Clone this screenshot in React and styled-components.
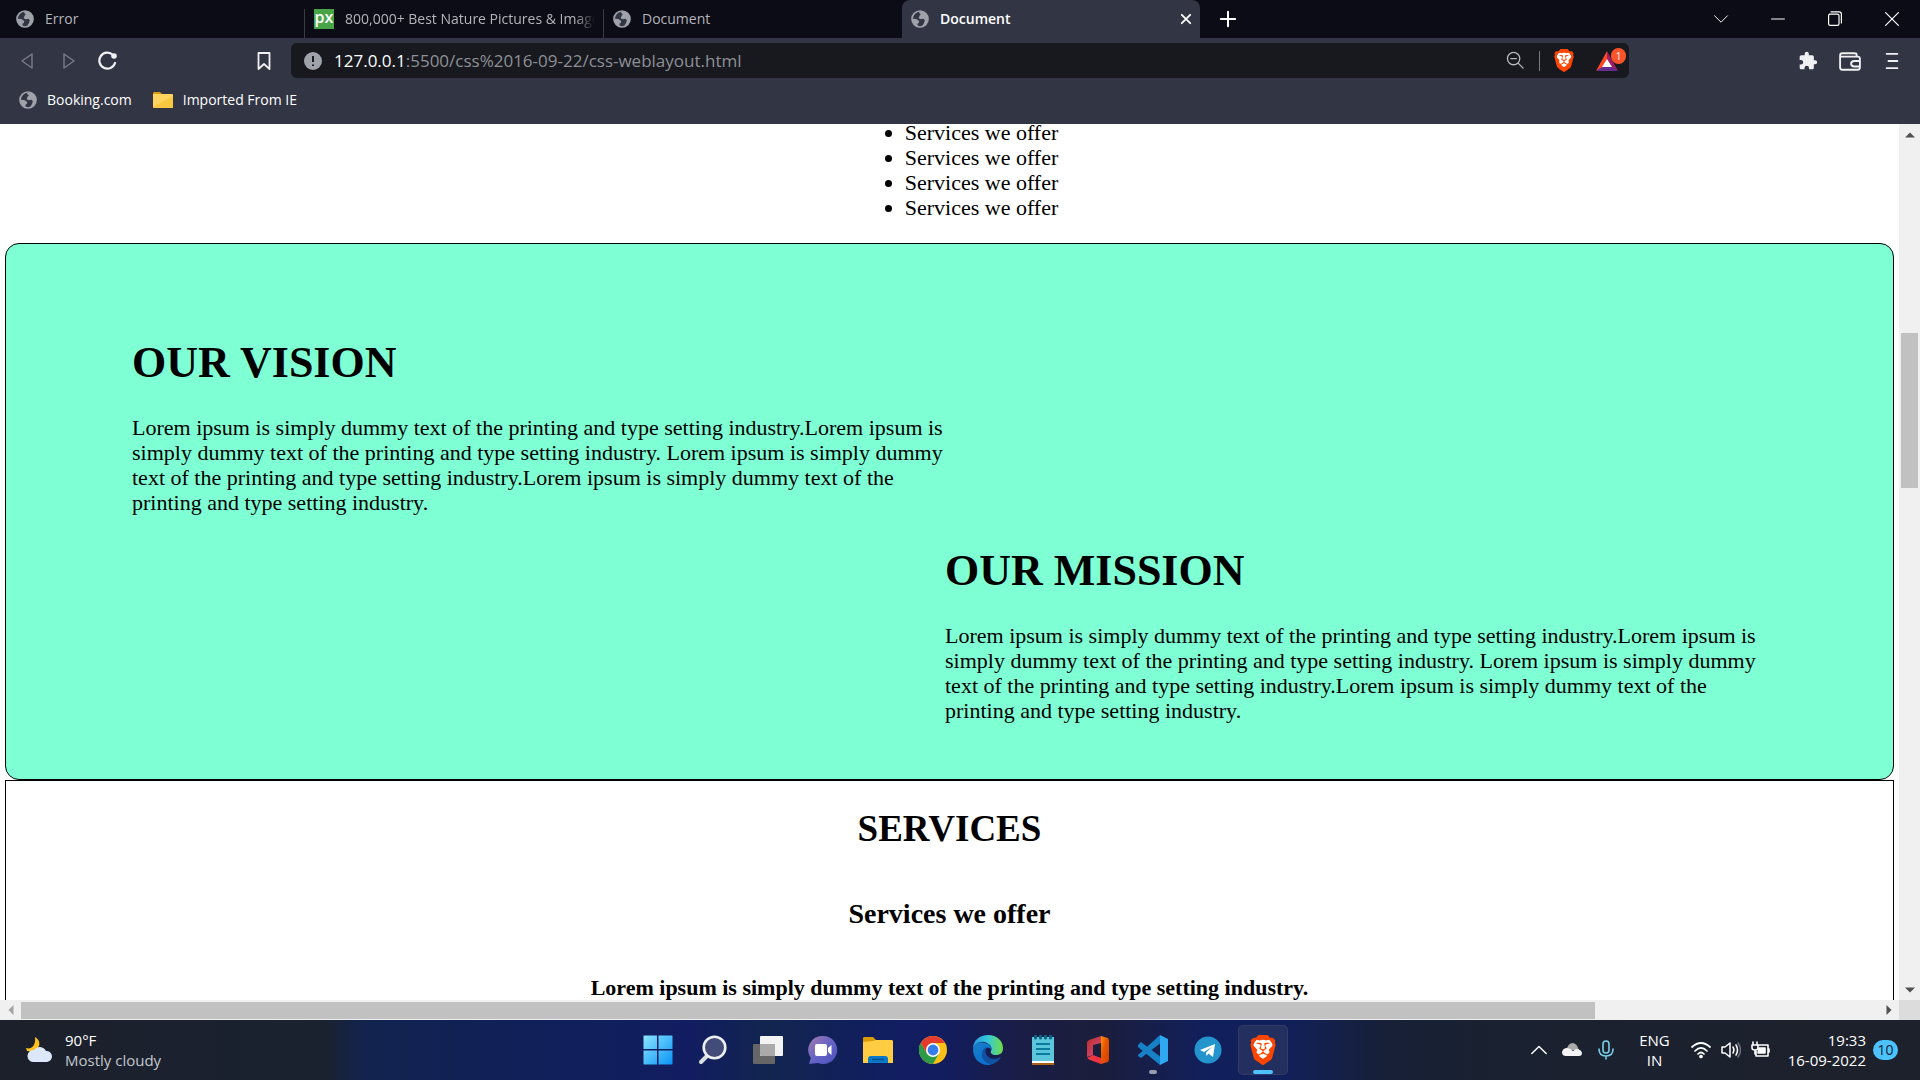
import React from 'react';
import styled, { createGlobalStyle, css } from 'styled-components';
import { SiBrave } from 'react-icons/si';

const Global = createGlobalStyle`
  * { box-sizing: border-box; }
  html, body { margin: 0; height: 100%; overflow: hidden; }
  #root { height: 100%; }
  button { border: 0; padding: 0; background: none; color: inherit; font: inherit; display: flex; align-items: center; justify-content: center; flex: none; }
  a { color: inherit; text-decoration: none; }
  svg { display: block; flex: none; }
`;

const uiFont = css`font-family: "Open Sans", "Noto Sans", sans-serif;`;

const Desktop = styled.div`
  display: flex;
  flex-direction: column;
  height: 100vh;
  background: #fff;
`;

/* Browser frame */
const TabStrip = styled.header`
  ${uiFont}
  display: flex;
  flex: none;
  height: 38px;
  background: #0b0c15;
  color: #fff;
`;
const Tabs = styled.nav`
  display: flex;
  flex: 0 1 1200px;
  min-width: 0;
`;
const Tab = styled.div`
  display: flex;
  align-items: center;
  flex: 0 1 ${p => (p.$first ? '304px' : '298px')};
  min-width: 0;
  gap: 11px;
  padding: 0 8px 0 ${p => (p.$first ? '16px' : '9px')};
  font-size: 14px;
  line-height: 20px;
  color: ${p => (p.$active ? '#fff' : '#b4b5bb')};
  font-weight: ${p => (p.$active ? 600 : 400)};
  background: ${p => (p.$active ? '#323544' : 'transparent')};
  border-radius: 8px 8px 0 0;
`;
const TabSeparator = styled.span`
  flex: none;
  width: 1px;
  margin-top: 9px;
  background: #3a3b43;
`;
const TabTitle = styled.a`
  flex: 1;
  min-width: 0;
  overflow: hidden;
  white-space: nowrap;
  mask-image: ${p => (p.$fade ? 'linear-gradient(90deg, #000 92%, transparent)' : 'none')};
`;
const NewTab = styled.button`width: 56px;`;
const WindowButtons = styled.div`
  display: flex;
  margin-left: auto;
  button { width: 57px; }
`;
const Toolbar = styled.div`
  ${uiFont}
  display: flex;
  align-items: center;
  flex: none;
  height: 45px;
  padding: 0 8px;
  background: #323544;
  color: #f1f1f3;
  button { width: 40px; height: 35px; }
`;
const ToolGroup = styled.div`
  display: flex;
  align-items: center;
  gap: ${p => (p.$end ? '2px' : '0')};
  margin-left: ${p => (p.$end ? 'auto' : '0')};
`;
const Bookmark = styled.div`
  display: flex;
  justify-content: flex-end;
  flex: 0 0 163px;
  padding-right: 7px;
`;
const AddressBar = styled.form`
  display: flex;
  align-items: center;
  flex: 0 1 1338px;
  min-width: 0;
  height: 35px;
  padding: 0 2px 0 13px;
  gap: 12px;
  border-radius: 6px;
  background: #17191f;
`;
const AddressText = styled.label`
  flex: 1;
  display: flex;
  align-items: center;
  min-width: 0;
  font-size: 17px;
  line-height: 24px;
  color: #fff;
`;
const AddressInput = styled.input`
  ${uiFont}
  flex: 1;
  min-width: 0;
  height: 24px;
  border: 0;
  padding: 0;
  outline: 0;
  background: none;
  font-size: 17px;
  color: #8e9096;
`;
const AddressTools = styled.div`
  display: flex;
  align-items: center;
`;
const Divider = styled.span`width: 1px; height: 20px; margin: 0 4px; background: #777980;`;
const RewardsButton = styled.button`position: relative; margin-left: 3px;`;
const RewardsCount = styled.span`
  position: absolute;
  top: 5px;
  right: 1px;
  width: 15px;
  height: 16px;
  border-radius: 8px;
  background: #fb542b;
  color: #fff;
  font-size: 10px;
  line-height: 16px;
  text-align: center;
`;
const BookmarksBar = styled.nav`
  ${uiFont}
  display: flex;
  flex: none;
  height: 41px;
  padding: 5px 19px 0;
  gap: 21px;
  background: #323544;
  color: #fff;
  font-size: 14px;
  line-height: 24px;
  a { display: flex; align-items: center; gap: 10px; height: 24px; }
`;

/* Web page */
const Viewport = styled.div`
  display: grid;
  flex: 1;
  min-height: 0;
  grid-template-columns: minmax(0, 1fr) 21px;
  grid-template-rows: minmax(0, 1fr) 20px;
`;
const Page = styled.main`
  overflow: hidden;
  padding: 0 5px;
  background: #fff;
  color: #000;
  font-family: "Liberation Serif", "Times New Roman", serif;
  font-size: 22px;
  line-height: 25px;
`;
const OfferList = styled.ul`
  width: fit-content;
  margin: -4px auto 23px;
  padding-left: 64px;
`;
const Vision = styled.section`
  padding: 93px 135px 26px 126px;
  border: 1px solid #000;
  border-radius: 14px;
  background: #7fffd4;
`;
const Statement = styled.article`
  width: 50%;
  margin-left: ${p => (p.$right ? '50%' : '0')};
  padding-bottom: 30px;
  h1 { margin: 0; font-size: 44px; line-height: 51px; }
  p { margin: 27px 0 0; }
`;
const Services = styled.section`
  height: 400px;
  border: 1px solid #000;
  text-align: center;
  h2 { margin: 26px 0 0; font-size: 37px; line-height: 43px; }
  h3 { margin: 48px 0 0; font-size: 28px; line-height: 32px; }
  h4 { margin: 45px 0 0; font-size: 22px; line-height: 25px; }
`;
const VerticalBar = styled.div`
  display: flex;
  flex-direction: column;
  align-items: center;
  background: #f0f0f0;
`;
const HorizontalBar = styled.div`
  display: flex;
  align-items: center;
  background: #f0f0f0;
`;
const BarArrow = styled.button`
  width: 21px;
  height: 21px;
  color: ${p => (p.$dim ? '#a3a3a3' : '#505050')};
`;
const VTrack = styled.div`
  flex: 1;
  display: grid;
  width: 17px;
  grid-template-rows: 188fr 155fr 491fr;
  &::after { content: ''; grid-row: 2; background: #c1c1c1; }
`;
const HTrack = styled.div`
  flex: 1;
  display: grid;
  height: 17px;
  grid-template-columns: 1574fr 283fr;
  &::after { content: ''; background: #c1c1c1; }
`;
const Corner = styled.div`background: #dcdcdc;`;

/* Taskbar */
const Taskbar = styled.footer`
  ${uiFont}
  display: grid;
  grid-template-columns: 1fr auto 1fr;
  align-items: center;
  flex: none;
  height: 60px;
  padding: 0 22px;
  color: #fff;
  font-size: 15px;
  line-height: 20px;
  background: linear-gradient(90deg, #1c202b 0, #1a2230 17%, #12234f 19%, #111f5c 30%, #111d60 36%, #12254f 40%, #111e60 46%, #121d60 49%, #1a1d46 53%, #1b1e3b 57%, #111f5c 63%, #11205a 67%, #172038 72%, #1a2130 78%, #1d212b 100%);
`;
const Weather = styled.button`
  && { display: flex; justify-content: flex-start; justify-self: start; gap: 12px; padding-left: 3px; text-align: left; }
  span { color: #c4c7cd; }
`;
const Apps = styled.nav`display: flex; gap: 5px;`;
const AppButton = styled.button`
  position: relative;
  width: 50px;
  height: 50px;
  border-radius: 5px;
  background: ${p => (p.$active ? '#23305f' : 'none')};
  box-shadow: ${p => (p.$active ? 'inset 0 0 0 1px #303b68' : 'none')};
  &::after {
    content: '';
    display: ${p => (p.$active || p.$open ? 'block' : 'none')};
    position: absolute;
    bottom: 1px;
    width: ${p => (p.$active ? '20px' : '8px')};
    height: 4px;
    border-radius: 2px;
    background: ${p => (p.$active ? '#4cc2ff' : '#9a9dad')};
  }
`;
const Tray = styled.div`
  display: flex;
  align-items: center;
  justify-self: end;
  gap: 14px;
`;
const Language = styled.button`
  && { display: block; text-align: center; margin: 0 7px 0 9px; }
`;
const Status = styled.button`&& { gap: 10px; }`;
const Clock = styled.button`
  && { display: block; text-align: right; }
`;
const ClockGroup = styled.div`display: flex; align-items: center; gap: 7px; margin-left: 3px;`;
const Notices = styled.span`
  width: 25px;
  height: 20px;
  border-radius: 10px;
  background: #4cc2ff;
  color: #10202c;
  text-align: center;
  font-size: 14px;
  line-height: 20px;
`;

const Globe = () => (
  <svg width="18" height="18" viewBox="0 0 18 18">
    <circle cx="9" cy="9" r="8" fill="#323544" stroke="#a0a2aa" strokeWidth="1.7" />
    <path d="M9.500 1.200 7.800 2.800 9.800 4.300 8.500 5.800 7.700 8.300 9.800 9.200 12.500 8.800 13.800 10.200 13 13 11.200 15.800C15.300 14.800 17 12.200 17 9 17 4.600 14 1.500 9.500 1.200Z M1.500 8.800 5.300 9 8.200 11 7.800 13 6.500 13.600 6.500 16.600C3.400 15.600 1.500 12.800 1.500 8.800Z" fill="#a0a2aa" />
  </svg>
);
const Line = ({ d, w = 20, s = 1.5, c = 'currentColor', children }) => (
  <svg width={w} height={w} viewBox="0 0 20 20" fill="none" stroke={c} strokeWidth={s} strokeLinecap="round" strokeLinejoin="round"><path d={d} />{children}</svg>
);
const Lion = ({ w, h }) => (
  <svg width={w} height={h} viewBox="1.5 0 21 24" preserveAspectRatio="none">
    <path fill="#fff" d="M6 3.500H18L20 8 17 17 12 21 7 17 4 8Z" />
    <SiBrave size={24} color="#ff4500" />
  </svg>
);
const Arrow = ({ dir }) => (
  <svg width="10" height="10" viewBox="0 0 10 10"><path fill="currentColor" transform={`rotate(${dir} 5 5)`} d="M0 7.5 5 2.5 10 7.5Z" /></svg>
);
const Folder = () => (
  <svg width="20" height="16" viewBox="0 0 20 16">
    <path d="M1 0H7L9 2H19V8H0V1Z" fill="#dc9a13" /><rect y="2" width="20" height="14" rx="1" fill="#ffd55f" /><path d="M0 15 20 4V15Q20 16 19 16H1Z" fill="#f9c841" />
  </svg>
);

const apps = [
  ['Start', <svg width="30" height="30" viewBox="0 0 30 30"><defs><linearGradient id="win" x2="1" y2="1"><stop stopColor="#8be5ff" /><stop offset="1" stopColor="#0894f5" /></linearGradient></defs><path fill="url(#win)" d="M1 .5H14V14H.5V1ZM15.5.5H29L29.5 1V14H15.5ZM.5 15.5H14V29.5H1L.5 29ZM15.5 15.5H29.5V29L29 29.5H15.5Z" /></svg>],
  ['Search', <svg width="30" height="30" viewBox="0 0 30 30"><path d="M9 21 3 27" stroke="#d8dde0" strokeWidth="4" strokeLinecap="round" /><circle cx="16.5" cy="12.5" r="10.8" fill="#434c79" stroke="#edf0f0" strokeWidth="2.6" /></svg>],
  ['Task view', <svg width="30" height="30" viewBox="0 0 30 30"><rect y="9" width="22" height="20" rx="1" fill="#666" /><rect x="7" y="1" width="23" height="20" rx="1" fill="#f3f3f3" /><path d="M7 9H22V21H8L7 20Z" fill="#aaa" /></svg>],
  ['Chat', <svg width="30" height="30" viewBox="0 0 30 30"><defs><linearGradient id="chat" x2="1" y2="1"><stop stopColor="#a77aad" /><stop offset=".5" stopColor="#6664c5" /><stop offset="1" stopColor="#4b4fc0" /></linearGradient></defs><path fill="url(#chat)" d="M15 1A14 14 0 1 1 10 28L1 29 2.8 23A14 14 0 0 1 15 1Z" /><rect x="7" y="9" width="12" height="12" rx="2" fill="#fff" /><path d="M20 13 23.5 10V20L20 17Z" fill="#fff" /></svg>],
  ['File Explorer', <svg width="30" height="28" viewBox="0 0 30 28"><path d="M1 1H10L13 4V9H0V2Z" fill="#dc9b04" /><path d="M0 6 10 5 13 4H29L30 5V27H0Z" fill="#ffcc42" /><path d="M5 27V23Q5 20 8 20H22Q25 20 25 23V27Z" fill="#0878c8" /><path d="M9 23.5H21" stroke="#0a4e91" strokeWidth="1.5" /></svg>],
  ['Chrome', <svg width="28" height="28" viewBox="0 0 28 28"><circle cx="14" cy="14" r="14" fill="#fbc116" /><path d="M1.8 7A14 14 0 0 0 14 28L20 17.5 14 14 8 17.5Z" fill="#2b9b47" /><path d="M1.8 7A14 14 0 0 1 26 7H14L8 17.5Z" fill="#e33b2e" /><circle cx="14" cy="14" r="7" fill="#fff" /><circle cx="14" cy="14" r="5.4" fill="#357ded" /></svg>],
  ['Edge', <svg width="30" height="30" viewBox="0 0 30 30"><defs><linearGradient id="edgeA"><stop stopColor="#2698e4" /><stop offset=".5" stopColor="#36c8d9" /><stop offset="1" stopColor="#72dd45" /></linearGradient><linearGradient id="edgeB" y2="1"><stop stopColor="#1780cb" /><stop offset="1" stopColor="#0868d0" /></linearGradient></defs><path fill="url(#edgeA)" d="M0 14C0 5 7 0 15 0 24 0 30 6 30 13 30 18 27 20 23 20 19 20 17 18 18 16 20 13 17 8 11 7 6 6 2 9 0 14Z" /><path fill="url(#edgeB)" d="M0 14C2 8 7 6 12 8 17 9 19 12 18 15 16 10 10 13 12 20 14 26 21 27 27 22 23 28 19 30 15 30 6 30 0 23 0 14Z" /><path fill="#1052a0" d="M13 12C8 15 6 25 17 29 22 29 26 26 28 22 22 26 10 24 13 12Z" /></svg>],
  ['Notepad', <svg width="24" height="30" viewBox="0 0 24 30"><path d="M1 24H23V30H1Z" fill="#a95f16" /><path d="M1 24H23V28H1Z" fill="#fff" /><path d="M1 2H23V26H1Z" fill="#5dc5db" /><path d="M5 9H19M5 14H19M5 19H19" stroke="#087a9e" strokeWidth="2" /><path d="M4.5 1V3M9.5 1V3M14.5 1V3M19.5 1V3" stroke="#0a6584" strokeWidth="3" strokeLinecap="round" /></svg>],
  ['Office', <svg width="24" height="28" viewBox="0 0 24 28"><defs><linearGradient id="off" y2="1"><stop stopColor="#b92c20" /><stop offset="1" stopColor="#da4f91" /></linearGradient><linearGradient id="offR" y2="1"><stop stopColor="#ff9d00" /><stop offset=".4" stopColor="#e95700" /><stop offset="1" stopColor="#d73b02" /></linearGradient></defs><path fill="url(#off)" d="M15 0 3 4 1 6V21L7 19V9L15 7Z" /><path fill="#ef3544" d="M1 22 7 19 15 22V28L4 24Z" /><path fill="url(#offR)" d="M15 0 22 2 23 4V24L22 26 15 28Z" /></svg>],
  ['Visual Studio Code', <svg width="30" height="30" viewBox="0 0 30 30"><path fill="#1681c6" d="M0 10 3 7 22 21.500V30L0 12ZM0 20 22 0V8.500L3 23 0 21Z" /><path fill="#2fa8f1" d="M22 0 30 4V26L22 30Z" /></svg>, 'open'],
  ['Telegram', <svg width="28" height="28" viewBox="0 0 28 28"><circle cx="14" cy="14" r="13.5" fill="#2395cc" /><path fill="#fff" d="M6 14 21 8 19 21 14.5 17.5 12.5 20 12 16.5 18 11 10 16Z" /></svg>],
  ['Brave', <Lion w="26" h="30" />, 'active'],
];

const lorem = 'Lorem ipsum is simply dummy text of the printing and type setting industry.';
const tabs = [['Error'], ['800,000+ Best Nature Pictures & Images', 'px'], ['Document'], ['Document', 'active']];
const PxLogo = styled.span`
  flex: none;
  width: 20px;
  height: 20px;
  background: #48a547;
  color: #fff;
  text-align: center;
  font-size: 16px;
  line-height: 16px;
  font-weight: 600;
`;

export default function App() {
  return (
    <Desktop>
      <Global />
      <TabStrip>
        <Tabs aria-label="Tabs">
          {tabs.map(([title, kind], i) => (
            <React.Fragment key={i}>
              {(i === 1 || i === 2) && <TabSeparator />}
              <Tab $first={i === 0} $active={kind === 'active'}>
                {kind === 'px' ? <PxLogo>px</PxLogo> : <Globe />}
                <TabTitle href="#" $fade={kind === 'px'}>{title}</TabTitle>
                {kind === 'active' && <button aria-label="Close tab"><Line w={12} s={3} d="M3 3 17 17M17 3 3 17" /></button>}
              </Tab>
            </React.Fragment>
          ))}
        </Tabs>
        <NewTab aria-label="New tab"><Line w={18} s={2.2} d="M10 2V18M2 10H18" /></NewTab>
        <WindowButtons>
          <button aria-label="Search tabs"><Line w={16} s={1.2} d="M2 6 10 14 18 6" /></button>
          <button aria-label="Minimize"><Line w={16} s={1.4} d="M2 10H18" /></button>
          <button aria-label="Restore"><Line w={16} d="M3 4H13Q15 4 15 6V16Q15 18 13 18H4Q2 18 2 16V6Q2 4 4 4M5 1H15Q18 1 18 4V15" /></button>
          <button aria-label="Close"><Line w={16} d="M2 2 18 18M18 2 2 18" /></button>
        </WindowButtons>
      </TabStrip>
      <Toolbar>
        <ToolGroup>
          <button aria-label="Back"><Line w={20} c="#777983" d="M14 3V17L4 10Z" /></button>
          <button aria-label="Forward"><Line w={20} c="#777983" d="M6 3V17L16 10Z" /></button>
          <button aria-label="Reload"><Line w={20} s={2.2} d="M17 12A8 8 0 1 1 15 4"><circle cx="16" cy="5" r="1.7" fill="currentColor" /></Line></button>
        </ToolGroup>
        <Bookmark><button aria-label="Bookmark this page"><Line w={20} s={1.8} d="M4.5 2H15.5V18L10 13 4.5 18Z" /></button></Bookmark>
        <AddressBar>
          <svg width="18" height="18" viewBox="0 0 18 18"><circle cx="9" cy="9" r="9" fill="#a0a2aa" /><path d="M9 4V10M9 12.5V14" stroke="#17191f" strokeWidth="2" /></svg>
          <AddressText>127.0.0.1<AddressInput aria-label="Address" defaultValue=":5500/css%2016-09-22/css-weblayout.html" /></AddressText>
          <AddressTools>
            <button type="button" aria-label="Zoom"><Line w={19} s={1.4} c="#b6b7bb" d="M13 13 18 18M5 8H11"><circle cx="8" cy="8" r="6.5" /></Line></button>
            <Divider />
            <button type="button" aria-label="Brave Shields"><Lion w="20" h="23" /></button>
            <RewardsButton type="button" aria-label="Brave Rewards">
              <svg width="22" height="20" viewBox="0 0 22 20"><path d="M11 0 0 20 11 14Z" fill="#ff4724" /><path d="M11 0 22 20 11 14Z" fill="#9e1f63" /><path d="M0 20H22L11 13Z" fill="#662d91" /><path d="M11 8 6 16H16Z" fill="#fff" /></svg>
              <RewardsCount>1</RewardsCount>
            </RewardsButton>
          </AddressTools>
        </AddressBar>
        <ToolGroup $end>
          <button aria-label="Extensions"><svg width="20" height="20" viewBox="0 0 24 24"><path fill="currentColor" d="M20.5 11H19V7c0-1.1-.9-2-2-2h-4V3.500a2.500 2.500 0 0 0-5 0V5H4c-1.100 0-2 .9-2 2v3.800h1.500a2.700 2.700 0 0 1 0 5.400H2V20c0 1.100.9 2 2 2h3.800v-1.500a2.700 2.700 0 0 1 5.400 0V22H17c1.100 0 2-.9 2-2v-4h1.500a2.500 2.500 0 0 0 0-5z" /></svg></button>
          <button aria-label="Wallet"><Line w={22} s={1.7} d="M16 6V4Q16 3 14 3H3Q1 3 1 5V16Q1 18 3 18H17Q19 18 19 16V8Q19 6 17 6H2M19 10H14Q11 10 11 12.500 11 15 14 15H19" /></button>
          <button aria-label="Menu"><Line w={18} s={2} d="M4 2H16M6 10H16M4 18H16" /></button>
        </ToolGroup>
      </Toolbar>
      <BookmarksBar aria-label="Bookmarks">
        <a href="#"><Globe />Booking.com</a>
        <a href="#"><Folder />Imported From IE</a>
      </BookmarksBar>

      <Viewport>
        <Page>
          <OfferList>{[1, 2, 3, 4].map(n => <li key={n}>Services we offer</li>)}</OfferList>
          <Vision>
            <Statement><h1>OUR VISION</h1><p>{lorem + lorem} {lorem + lorem}</p></Statement>
            <Statement $right><h1>OUR MISSION</h1><p>{lorem + lorem} {lorem + lorem}</p></Statement>
          </Vision>
          <Services><h2>SERVICES</h2><h3>Services we offer</h3><h4>{lorem}</h4></Services>
        </Page>
        <VerticalBar><BarArrow aria-label="Scroll up"><Arrow dir={0} /></BarArrow><VTrack /><BarArrow aria-label="Scroll down"><Arrow dir={180} /></BarArrow></VerticalBar>
        <HorizontalBar><BarArrow $dim aria-label="Scroll left"><Arrow dir={270} /></BarArrow><HTrack /><BarArrow aria-label="Scroll right"><Arrow dir={90} /></BarArrow></HorizontalBar>
        <Corner />
      </Viewport>

      <Taskbar>
        <Weather>
          <svg width="28" height="28" viewBox="0 0 28 28"><path fill="#ffc21c" d="M10 1C19 6 13 18 2 15L1 12C7 14 11 9 10 1Z" /><path fill="#dce8fa" d="M8 26A6 6 0 1 1 9 14 7 7 0 0 1 21 15 5.500 5.500 0 1 1 22 26Z" /></svg>
          <div>90°F<br /><span>Mostly cloudy</span></div>
        </Weather>
        <Apps aria-label="Taskbar">
          {apps.map(([name, icon, state]) => <AppButton key={name} aria-label={name} $active={state === 'active'} $open={state === 'open'}>{icon}</AppButton>)}
        </Apps>
        <Tray>
          <button aria-label="Hidden icons"><Line w={18} s={1.6} d="M2 14 10 6 18 14" /></button>
          <button aria-label="OneDrive"><svg width="20" height="14" viewBox="0 0 20 14"><path d="M5 5Q7 0 11 0 15 1 16 5L17 7H3Z" fill="#aaa" /><path d="M4 13Q0 13 0 9 1 5 5 5 8 5 11 8L14 6Q19 6 20 10 20 13 17 13Z" fill="#f4f4f4" /></svg></button>
          <button aria-label="Microphone"><Line w={20} s={1.6} c="#79cfe8" d="M10 1Q13 1 13 4V10Q13 13 10 13 7 13 7 10V4Q7 1 10 1M3 9Q3 16 10 16 17 16 17 9M10 16V19" /></button>
          <Language>ENG<br />IN</Language>
          <Status aria-label="Network, sound and battery">
            <Line w={20} s={1.7} d="M1 7Q10 -1 19 7M4 11Q10 5 16 11M7 14Q10 11 13 14"><circle cx="10" cy="16.500" r="1" fill="currentColor" /></Line>
            <Line w={20} s={1.5} d="M1 7H4L9 3V17L4 13H1ZM12 7Q14 10 12 13M15 5Q18 10 15 15"><path d="M17 3Q22 10 17 17" stroke="#687080" /></Line>
            <Line w={20} s={1.6} d="M7 5H17V16H5V11M18 9V12M2 2V5M6 2V5M1 5H7V8Q7 10 4 10 1 10 1 8ZM4 10V14"><path d="M8 8H14V13H7Z" fill="currentColor" /></Line>
          </Status>
          <ClockGroup><Clock>19:33<br />16-09-2022</Clock><Notices>10</Notices></ClockGroup>
        </Tray>
      </Taskbar>
    </Desktop>
  );
}
